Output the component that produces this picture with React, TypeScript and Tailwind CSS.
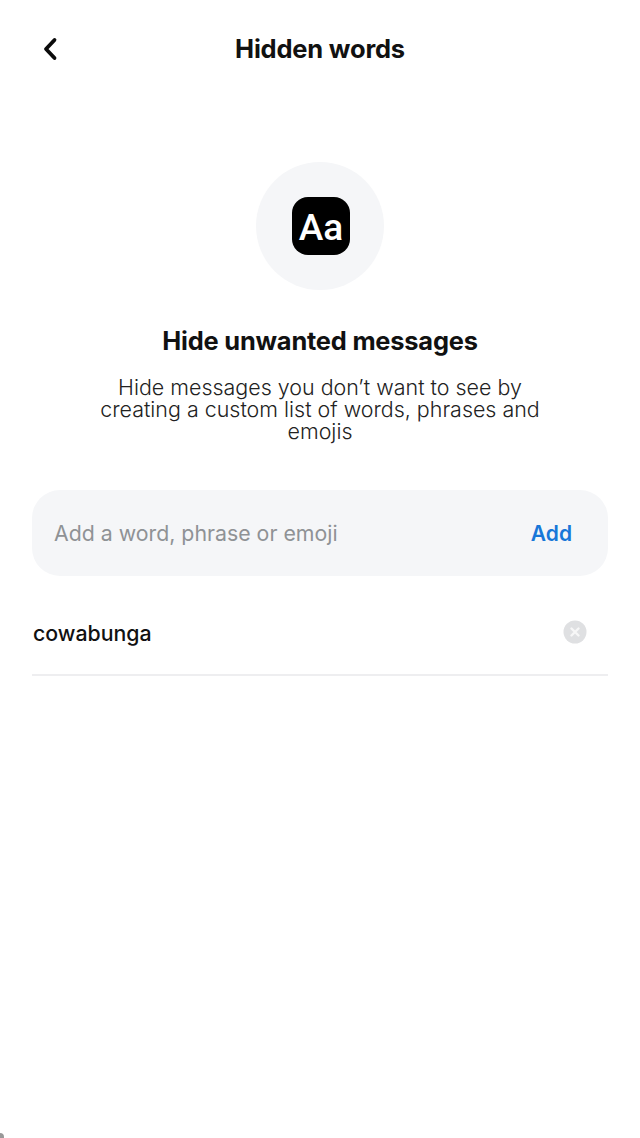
const FONT = "font-['Inter','Liberation_Sans',sans-serif]";

function BackIcon() {
  return (
    <svg className="h-[24px] w-[18px]" fill="none" viewBox="0 0 18 24">
      <path
        d="M13.5 3 5 12 13.5 21"
        stroke="#0b0b0b"
        strokeLinecap="round"
        strokeLinejoin="round"
        strokeWidth="3.8"
      />
    </svg>
  );
}

function ClearIcon() {
  return (
    <svg className="size-[24px]" viewBox="0 0 24 24">
      <circle cx="12" cy="12" r="11.5" fill="#dfe0e2" />
      <path
        d="M8.5 8.5 15.5 15.5M15.5 8.5 8.5 15.5"
        stroke="#f7f7f7"
        strokeLinecap="round"
        strokeWidth="2.4"
      />
    </svg>
  );
}

export default function App() {
  return (
    <div className={`${FONT} relative min-h-[1138px] w-[640px] overflow-hidden bg-white`}>
      <header className="flex h-[98px] items-center px-[41px]">
        <BackIcon />
        <h1 className="flex-1 pr-[18px] text-center text-[25.5px] font-bold tracking-[-0.2px] text-[#111]">
          Hidden words
        </h1>
      </header>

      <div className="mt-[64px] flex flex-col items-center">
        <div className="flex size-[128px] items-center justify-center rounded-full bg-[#f5f6f8]">
          <div className="ml-[2px] flex h-[58px] w-[58px] items-center justify-center rounded-[16px] bg-black pt-[3px] font-['Roboto',sans-serif] text-[37px] font-medium text-white">
            Aa
          </div>
        </div>
        <h2 className="mt-[36px] text-[25.4px] leading-[30px] font-bold tracking-[-0.2px] text-[#111]">
          Hide unwanted messages
        </h2>
        <p className="mt-[20px] mb-[1px] w-[470px] text-center text-[21.45px] leading-[22px] font-light text-[#222]">
          Hide messages you don’t want to see by creating a custom list of
          words, phrases and emojis
        </p>
      </div>

      <div className="mx-[32px] mt-[47px] flex h-[86px] items-center justify-between rounded-[28px] bg-[#f5f6f8] pt-[2px] pr-[36px] pl-[22px]">
        <span className="text-[21.3px] text-[#8f9295]">
          Add a word, phrase or emoji
        </span>
        <span className="text-[21px] font-semibold text-[#1877d8]">Add</span>
      </div>

      <div className="mx-[32px] mt-[14px] flex h-[86px] items-center justify-between border-b-2 border-[#eeeef0] pr-[21px]">
        <span className="pt-[4px] pl-[1px] text-[21.3px] font-medium text-[#111]">
          cowabunga
        </span>
        <ClearIcon />
      </div>

      <div className="absolute bottom-0 left-0 h-[5px] w-[4px] rounded-tr-[4px] bg-[#999]" />
    </div>
  );
}
